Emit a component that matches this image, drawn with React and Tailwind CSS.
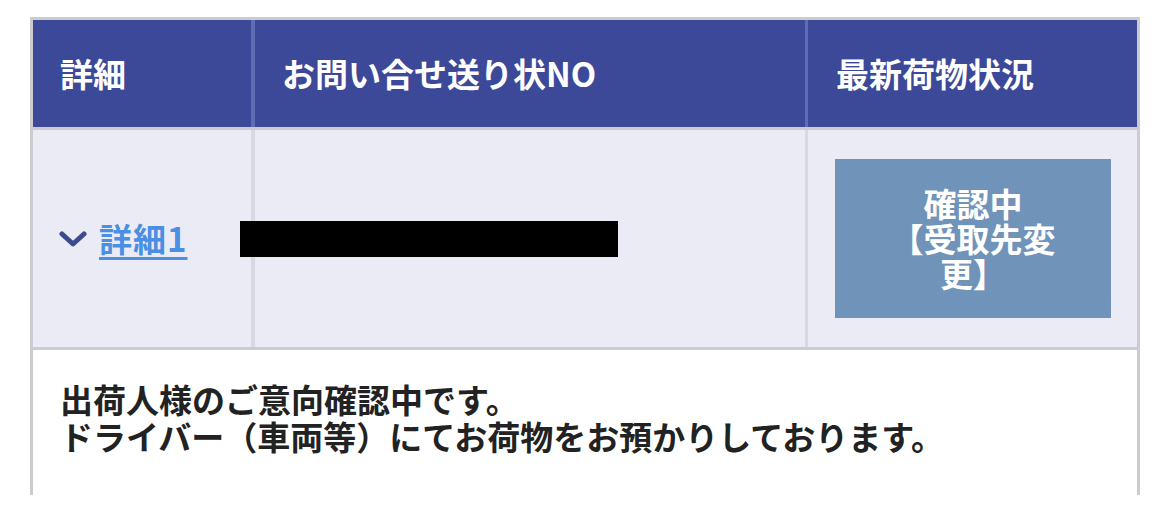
import React from "react";

const font = { fontFamily: '"Noto Sans CJK JP", "Noto Sans", sans-serif' };

function Chevron() {
  return (
    <svg width="28" height="18" viewBox="0 0 28 18" className="shrink-0">
      <polyline
        points="3,4 14,14 25,4"
        fill="none"
        stroke="#3d4a8c"
        strokeWidth="5"
        strokeLinecap="round"
        strokeLinejoin="round"
      />
    </svg>
  );
}

export default function App() {
  return (
    <div className="w-[1170px] h-[510px] bg-white overflow-hidden" style={font}>
      <div className="ml-[30px] mt-[17px] w-[1110px] border-[3px] border-b-0 border-[#cbcbd0]">
        {/* header */}
        <div className="flex h-[107px] bg-[#3c4898] text-white font-bold text-[33px]">
          <div className="w-[218px] flex items-center pl-[27px]">詳細</div>
          <div className="w-[4px] bg-[#5f6bb3]" />
          <div className="w-[550px] flex items-center pl-[27px]">お問い合せ送り状NO</div>
          <div className="w-[3px] bg-[#5f6bb3]" />
          <div className="flex-1 flex items-center pl-[28px]">最新荷物状況</div>
        </div>

        <div className="h-[3px] bg-[#cbcbd0]" />

        {/* row */}
        <div className="flex h-[217px] bg-[#ebebf5]">
          <div className="w-[218px] flex items-center pl-[26px] gap-[12px]">
            <Chevron />
            <a className="text-[33px] font-bold text-[#4a8fe3] underline underline-offset-[5px] decoration-[3px] leading-none tracking-[1px]">
              詳細1
            </a>
          </div>
          <div className="w-[4px] bg-[#d8d8e2]" />
          <div className="w-[550px] flex items-center">
            <div className="ml-[-15px] w-[378px] h-[36px] bg-black" />
          </div>
          <div className="w-[3px] bg-[#d8d8e2]" />
          <div className="flex-1 flex items-center pl-[27px]">
            <div className="w-[276px] h-[159px] bg-[#7093b9] flex flex-col items-center justify-center px-[48px] text-white font-bold text-[33px] leading-[35px] text-center">
              <span className="block">確認中</span>
              <span className="block">【受取先変更】</span>
            </div>
          </div>
        </div>

        <div className="h-[3px] bg-[#cbcbd0]" />

        {/* message */}
        <div className="pl-[27px] pt-[31px] pb-[40px] text-[33px] font-bold leading-[37px] text-[#222]">
          <p>出荷人様のご意向確認中です。</p>
          <p>ドライバー（車両等）にてお荷物をお預かりしております。</p>
        </div>
      </div>
    </div>
  );
}
